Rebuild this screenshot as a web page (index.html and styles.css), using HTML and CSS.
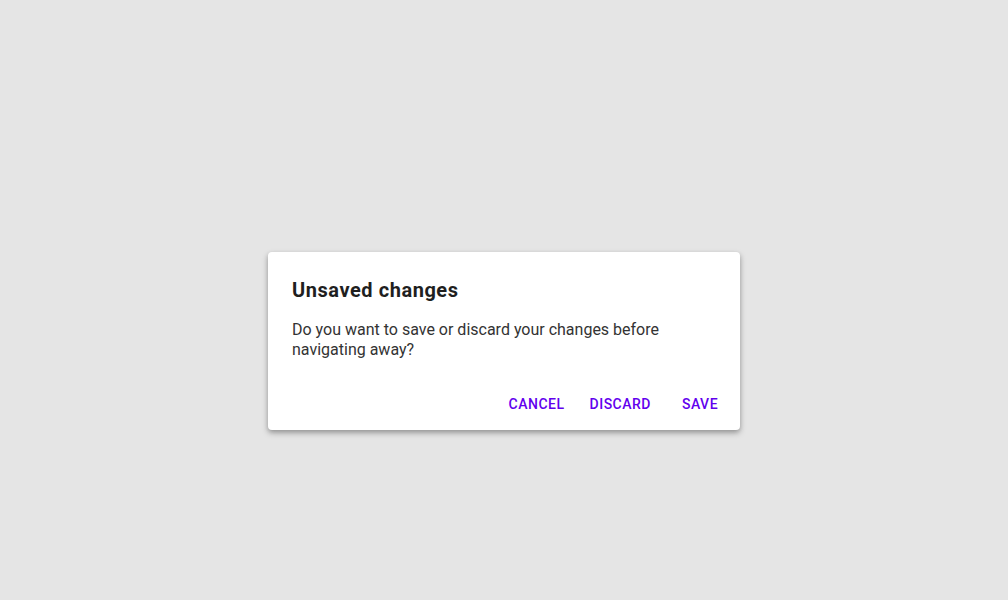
FILE: index.html
```html
<!DOCTYPE html>
<html lang="en">
<head>
<meta charset="utf-8">
<title>Unsaved changes</title>
<link rel="stylesheet" href="styles.css">
</head>
<body>
<div class="stage">
  <div class="dialog" role="dialog" aria-labelledby="dlg-title">
    <h2 class="dialog-title" id="dlg-title">Unsaved changes</h2>
    <div class="dialog-content">Do you want to save or discard your changes before navigating away?</div>
    <div class="dialog-actions">
      <button class="btn">Cancel</button>
      <button class="btn">Discard</button>
      <button class="btn">Save</button>
    </div>
  </div>
</div>
</body>
</html>
```
FILE: styles.css
```css
html, body {
  margin: 0;
  padding: 0;
  background: #e5e5e5;
  font-family: Roboto, "Liberation Sans", Arial, sans-serif;
}
.stage {
  height: 600px;
  box-sizing: border-box;
  padding-top: 252px;
  display: flex;
  justify-content: center;
  align-items: flex-start;
}
.dialog {
  width: 472px;
  background: #fff;
  border-radius: 4px;
  box-sizing: border-box;
  padding-top: 22px;
  box-shadow: 0 3px 6px rgba(0,0,0,.25), 0 2px 4px rgba(0,0,0,.15);
}
.dialog-title {
  margin: 0;
  padding: 0 24px;
  font-size: 20px;
  line-height: 32px;
  font-weight: 700;
  letter-spacing: 0.55px;
  color: #1f1f1f;
}
.dialog-content {
  margin-top: 14px;
  padding: 0 24px 18px;
  font-size: 16px;
  line-height: 20px;
  color: #333;
}
.dialog-actions {
  display: flex;
  justify-content: flex-end;
  gap: 9px;
  padding: 8px;
}
.btn {
  height: 36px;
  min-width: 64px;
  padding: 0 8px;
  border: 0;
  background: transparent;
  border-radius: 4px;
  font-family: inherit;
  font-size: 14px;
  font-weight: 500;
  letter-spacing: 0.5px;
  text-transform: uppercase;
  color: #6200ee;
  cursor: pointer;
}
```
